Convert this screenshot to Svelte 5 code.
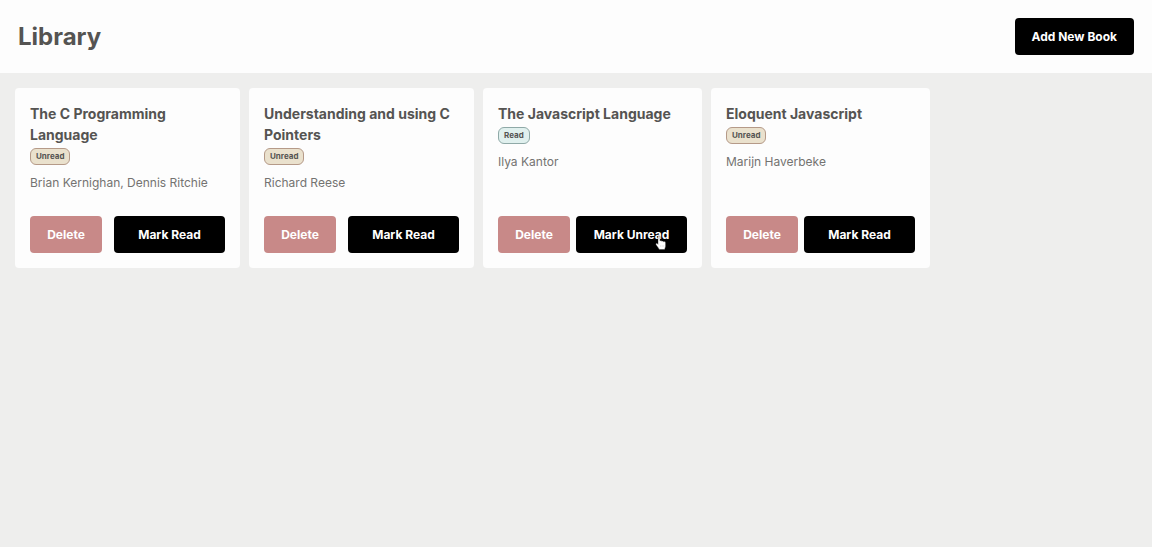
<script>
  let books = $state([
    { title: 'The C Programming Language', author: 'Brian Kernighan, Dennis Ritchie', read: false },
    { title: 'Understanding and using C Pointers', author: 'Richard Reese', read: false },
    { title: 'The Javascript Language', author: 'Ilya Kantor', read: true, pointer: true },
    { title: 'Eloquent Javascript', author: 'Marijn Haverbeke', read: false }
  ]);
</script>

<header>
  <h1>Library</h1>
  <button class="primary" type="button">Add New Book</button>
</header>

<main>
  {#each books as book, i}
    <article>
      <h2>{book.title}</h2>
      <span class="badge" class:read={book.read}>{book.read ? 'Read' : 'Unread'}</span>
      <p>{book.author}</p>
      <div class="actions">
        <button class="delete" type="button" onclick={() => books.splice(i, 1)}>Delete</button>
        <button class="primary toggle" type="button" onclick={() => (book.read = !book.read)}>
          {book.read ? 'Mark Unread' : 'Mark Read'}
          {#if book.pointer}
            <svg class="pointer" viewBox="0 0 12 16" width="12" height="16" aria-hidden="true">
              <path
                d="M3 1.8C3 .4 5 .4 5 1.8V6c.4-.7 1.7-.6 1.9.3.5-.6 1.6-.4 1.8.5.7-.5 1.9-.1 1.9 1v3.4c0 1.3-.8 1.9-.9 3.300H4.100C3.800 12.900 2 11.500 1 9.700c-.6-1.100.6-1.900 1.400-1.100l.6.700z"
                fill="#fff"
                stroke="#222"
                stroke-width=".4"
              />
              <path d="M5.600 10v2M7.200 10v2M8.800 10v2" stroke="#ccc" stroke-width=".4" />
            </svg>
          {/if}
        </button>
      </div>
    </article>
  {/each}
</main>

<style>
  :global(body) {
    margin: 0;
    background: #eeeeed;
    color: #555452;
    font-family: Inter, 'Liberation Sans', sans-serif;
  }

  header {
    display: flex;
    align-items: center;
    justify-content: space-between;
    padding: 18px;
    background: #fdfdfd;
  }

  h1 {
    margin: 0;
    font-size: 24px;
    line-height: 36px;
    font-weight: 700;
  }

  button {
    box-sizing: border-box;
    height: 37px;
    padding: 0 17px;
    border: 0;
    border-radius: 4px;
    color: #fff;
    font: 700 12px/18px Inter, 'Liberation Sans', sans-serif;
    white-space: nowrap;
    cursor: pointer;
  }

  .primary {
    background: #000;
  }

  main {
    display: flex;
    flex-wrap: wrap;
    align-items: stretch;
    gap: 9px;
    padding: 15px;
  }

  article {
    box-sizing: border-box;
    display: flex;
    flex-direction: column;
    align-items: flex-start;
    max-width: 225px;
    padding: 15px;
    border-radius: 4px;
    background: #fdfdfd;
  }

  h2 {
    margin: 0;
    font-size: 14px;
    line-height: 21px;
    font-weight: 700;
  }

  .badge {
    margin-top: 3px;
    padding: 0 5px;
    border: 1px solid #b59a88;
    border-radius: 6px;
    background: #eae1cd;
    font-size: 8px;
    line-height: 15px;
    font-weight: 700;
  }

  .badge.read {
    border-color: #8fa9a7;
    background: #e0f0ee;
  }

  p {
    margin: 9px 0 24px;
    font-size: 12px;
    line-height: 18px;
    color: #747371;
  }

  .actions {
    display: flex;
    align-self: stretch;
    justify-content: space-between;
    gap: 6px;
    margin-top: auto;
  }

  .delete {
    width: 72px;
    background: #c88988;
  }

  .toggle {
    position: relative;
    width: 111px;
  }

  .pointer {
    position: absolute;
    right: 20px;
    bottom: 2px;
  }
</style>
